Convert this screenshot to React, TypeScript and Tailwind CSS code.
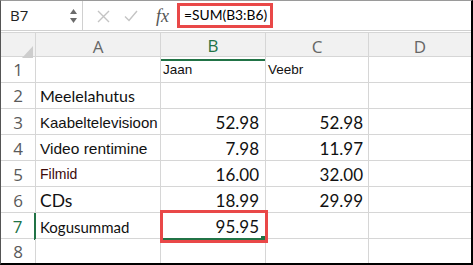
import React from 'react';

const grid = 'grid grid-cols-[35px_125px_105px_103px_1fr]';
const line = 'border-[#d6d6d6]';

interface Row {
  n: number;
  a?: string;
  aClass?: string;
  b?: string;
  c?: string;
}

const rows: Row[] = [
  { n: 1 },
  { n: 2, a: 'Meelelahutus', aClass: "font-['Lato'] text-[16px]" },
  { n: 3, a: 'Kaabeltelevisioon', aClass: "font-['Liberation_Sans'] text-[15px]", b: '52.98', c: '52.98' },
  { n: 4, a: 'Video rentimine', aClass: "font-['Liberation_Sans'] text-[15.5px]", b: '7.98', c: '11.97' },
  { n: 5, a: 'Filmid', aClass: "font-['Liberation_Sans'] text-[14px] text-[#3d0a0a]", b: '16.00', c: '32.00' },
  { n: 6, a: 'CDs', aClass: "font-['Lato'] text-[17.5px]", b: '18.99', c: '29.99' },
  { n: 7, a: 'Kogusummad', aClass: "font-['Lato'] text-[15px]", b: '95.95' },
  { n: 8 },
];

const App: React.FC = () => {
  return (
    <div className="relative w-[473px] h-[265px] overflow-hidden bg-white border-l border-t border-r-2 border-b-2 border-l-[#555] border-t-[#9a9a9a] border-r-black border-b-black text-[#111]">
      {/* formula bar */}
      <div className="flex h-[30px] items-center border-b border-[#d0d0d0]">
        <div className="flex h-full w-[82px] items-center justify-between border-r border-[#d0d0d0] pl-[9px] pr-[5px]">
          <span className="font-['Open_Sans'] text-[15px] text-[#222]">B7</span>
          <div className="flex flex-col gap-[4px] text-[#6b6b6b]">
            <svg width="7" height="5" viewBox="0 0 7 5"><path d="M3.5 0L7 5H0z" fill="currentColor" /></svg>
            <svg width="7" height="5" viewBox="0 0 7 5"><path d="M0 0h7L3.5 5z" fill="currentColor" /></svg>
          </div>
        </div>
        <div className="flex h-full w-[94px] items-center pl-[14px] text-[#c4c4c4]">
          <svg width="13" height="13" viewBox="0 0 13 13" className="mt-[1px]">
            <path d="M1 1l11 11M12 1L1 12" stroke="currentColor" strokeWidth="1.4" />
          </svg>
          <svg width="14" height="12" viewBox="0 0 14 12" className="ml-[14px]">
            <path d="M1 6.5l4 4L13 1" stroke="currentColor" strokeWidth="1.4" fill="none" />
          </svg>
          <span className="ml-[18px] font-['Liberation_Serif'] italic text-[18px] text-[#555] leading-none">fx</span>
        </div>
        <div className="flex h-full flex-1 items-center">
          <span className="border-[3px] border-[#e94848] pl-[4px] pr-[3px] h-[25px] flex items-center font-['Lato'] text-[13.8px] text-black">
            =SUM(B3:B6)
          </span>
        </div>
      </div>

      {/* column headers */}
      <div className={`${grid} mt-px h-[25px] bg-[#f1f1f1] border-y ${line}`}>
        <div className={`relative border-r ${line}`}>
          <svg width="11" height="12" viewBox="0 0 11 12" className="absolute right-[2px] bottom-[2px]">
            <path d="M11 0V12H0z" fill="#cdcdcd" />
          </svg>
        </div>
        <div className={`flex items-center justify-center border-r ${line} font-['Open_Sans'] text-[17px] text-[#666]`}>A</div>
        <div className={`flex items-center justify-center border-r ${line} border-b-2 border-b-[#217346] -mb-px font-['Open_Sans'] text-[17px] text-[#217346]`}>B</div>
        <div className={`flex items-center justify-center border-r ${line} font-['Open_Sans'] text-[17px] text-[#666]`}>C</div>
        <div className="flex items-center justify-center font-['Open_Sans'] text-[17px] text-[#666]">D</div>
      </div>

      {/* rows */}
      {rows.map((r) => (
        <div key={r.n} className={`${grid} h-[26px] border-b ${line}`}>
          <div
            className={`flex items-center justify-center font-['Open_Sans'] text-[17px] ${
              r.n === 7 ? 'border-r-2 border-[#217346] text-[#217346]' : `border-r ${line} text-[#5a5a5a]`
            }`}
          >
            {r.n}
          </div>
          <div className={`flex items-center overflow-hidden whitespace-nowrap border-r ${line} pl-[4px] pt-[1px] ${r.aClass ?? ''}`}>
            {r.a}
          </div>
          <div
            className={`relative flex items-center border-r ${line} ${
              r.n === 1 ? "pl-[2px] pt-[1px] font-['Liberation_Sans'] text-[13.5px]" : "justify-end pr-[6px] pt-[1px] font-['Lato'] text-[17px]"
            }`}
          >
            {r.n === 1 ? 'Jaan' : r.b}
            {r.n === 7 && (
              <>
                <div className="absolute left-0 right-[2px] bottom-0 h-[2px] bg-[#217346]" />
                <div className="absolute right-0 bottom-0 h-[4px] w-[4px] bg-[#217346]" />
              </>
            )}
          </div>
          <div
            className={`flex items-center border-r ${line} ${
              r.n === 1 ? "pl-[2px] pt-[1px] font-['Liberation_Sans'] text-[13.5px]" : "justify-end pr-[5px] pt-[1px] font-['Lato'] text-[17px]"
            }`}
          >
            {r.n === 1 ? 'Veebr' : r.c}
          </div>
          <div />
        </div>
      ))}

      {/* annotation round B7 */}
      <div className="absolute left-[159px] top-[209px] h-[33px] w-[108px] border-[3px] border-[#e94848]" />
    </div>
  );
};

export default App;
